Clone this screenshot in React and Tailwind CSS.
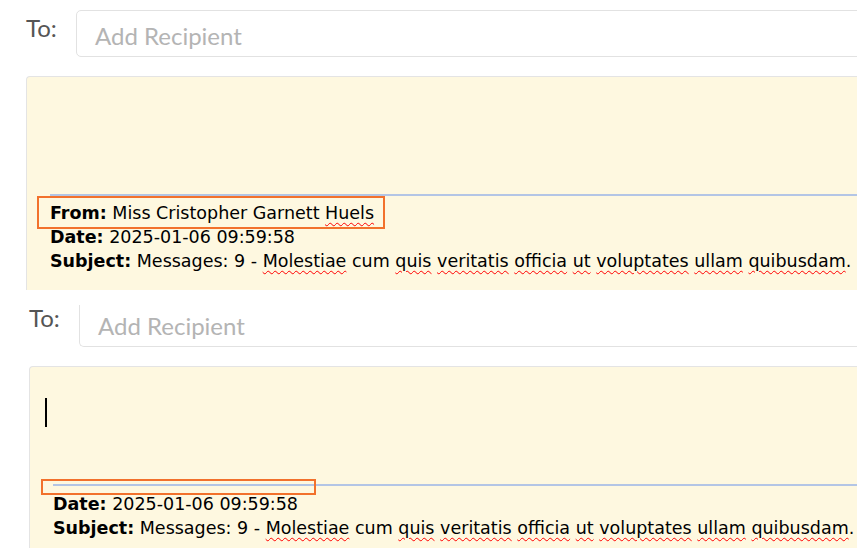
const lato = { fontFamily: "Lato, 'Open Sans', sans-serif" };
const mailFont = { fontFamily: "'DejaVu Sans', Verdana, sans-serif" };

function Typo({ children }) {
  return (
    <span className="underline decoration-wavy decoration-[#ff0000] decoration-1 underline-offset-[3px]">
      {children}
    </span>
  );
}

function SubjectLine() {
  return (
    <div className="whitespace-nowrap">
      <b>Subject:</b> Messages: 9 - <Typo>Molestiae</Typo> cum <Typo>quis</Typo>{" "}
      <Typo>veritatis</Typo> <Typo>officia</Typo> <Typo>ut</Typo> <Typo>voluptates</Typo>{" "}
      <Typo>ullam</Typo> <Typo>quibusdam</Typo>.
    </div>
  );
}

function ToRow({ cropped }) {
  return (
    <div className="flex pt-[10px]" style={lato}>
      <div className="w-[50px] shrink-0 pt-[3px] text-[24px] leading-[30px] text-[#555]">To:</div>
      <div
        className={
          cropped
            ? "mt-[5px] flex h-[42px] w-[820px] shrink-0 items-center rounded-bl-[5px] border-b border-l border-[#e2e2e2] pl-[18px] text-[24px] text-[#b4b4b4]"
            : "flex h-[47px] w-[820px] shrink-0 items-center rounded-[5px] border border-[#e2e2e2] pl-[18px] pt-[4px] text-[24px] text-[#b4b4b4]"
        }
      >
        Add Recipient
      </div>
    </div>
  );
}

export default function App() {
  return (
    <div className="h-[548px] w-[857px] overflow-hidden bg-white">
      {/* first capture */}
      <div className="h-[290px] overflow-hidden pl-[26px]">
        <ToRow />
        <div className="mt-[19px] h-[260px] w-[850px] rounded-tl-[4px] border-l border-t border-[#e4e4e4] bg-[#fef8e0]">
          <div className="ml-[23px] mt-[117px] h-[2px] bg-[#b3c5e5]"></div>
          <div className="mt-[5px] pl-[23px] text-[17.5px] leading-[24px] text-black" style={mailFont}>
            <div className="relative whitespace-nowrap">
              <b>From:</b> Miss Cristopher Garnett <Typo>Huels</Typo>
              <div className="absolute left-[-13px] top-[-5px] h-[33px] w-[348px] border-2 border-[#f2712c]"></div>
            </div>
            <div className="whitespace-nowrap">
              <b>Date:</b> 2025-01-06 09:59:58
            </div>
            <SubjectLine />
          </div>
        </div>
      </div>

      {/* second capture */}
      <div className="h-[258px] overflow-hidden pl-[29px]">
        <ToRow cropped />
        <div className="mt-[19px] h-[200px] w-[850px] rounded-tl-[4px] border-l border-t border-[#e4e4e4] bg-[#fef8e0]">
          <div className="ml-[15px] mt-[31px] h-[29px] w-[2px] bg-black"></div>
          <div className="relative ml-[23px] mt-[57px] h-[2px] bg-[#b3c5e5]">
            <div className="absolute left-[-12px] top-[-5px] h-[16px] w-[275px] border-2 border-[#f2712c]"></div>
          </div>
          <div className="mt-[6px] pl-[23px] text-[17.5px] leading-[24px] text-black" style={mailFont}>
            <div className="whitespace-nowrap">
              <b>Date:</b> 2025-01-06 09:59:58
            </div>
            <SubjectLine />
          </div>
        </div>
      </div>
    </div>
  );
}
